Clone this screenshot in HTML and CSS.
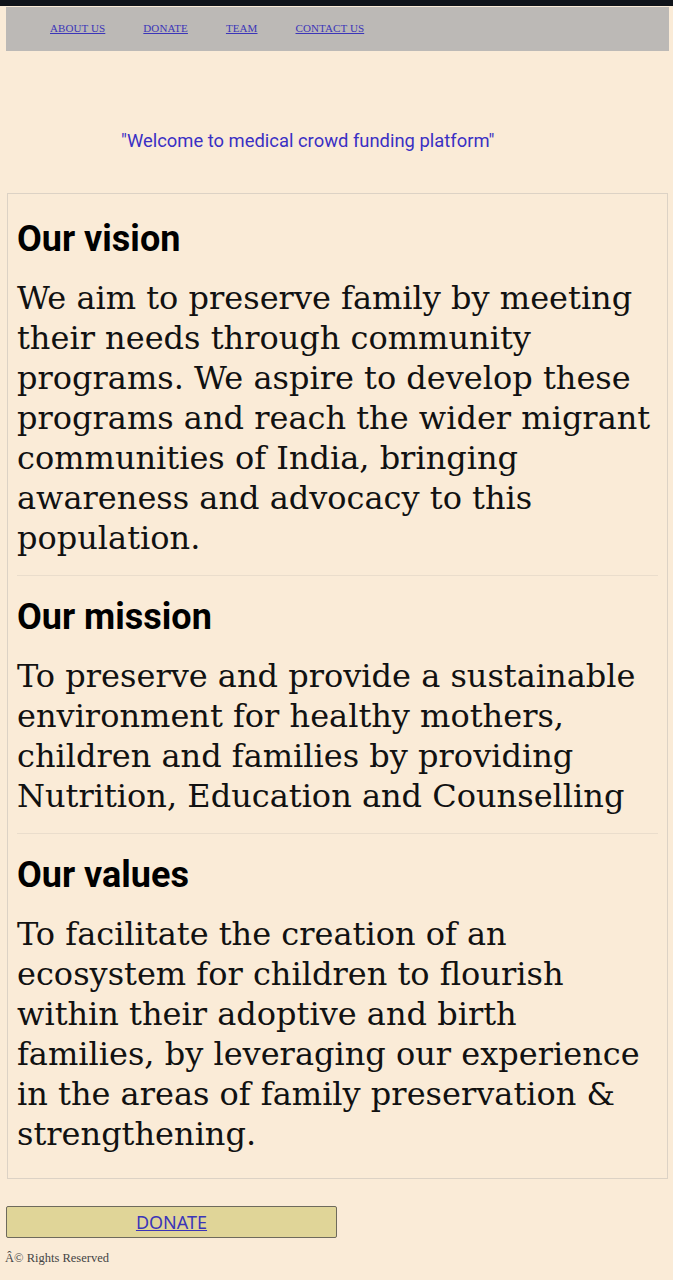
FILE: index.html
```html
<!DOCTYPE html>
<html>
<head>
<meta charset="utf-8">
<link rel="stylesheet" href="styles.css">
</head>
<body>
<div class="topstrip"></div>
<nav class="nav">
  <a href="#">ABOUT US</a>
  <a href="#">DONATE</a>
  <a href="#">TEAM</a>
  <a href="#">CONTACT US</a>
</nav>
<div class="welcome">"Welcome to medical crowd funding platform"</div>
<main class="card">
  <section class="block">
    <h2>Our vision</h2>
    <p>We aim to preserve family by meeting their needs through community programs. We aspire to develop these programs and reach the wider migrant communities of India, bringing awareness and advocacy to this population.</p>
  </section>
  <hr>
  <section class="block">
    <h2>Our mission</h2>
    <p>To preserve and provide a sustainable environment for healthy mothers, children and families by providing Nutrition, Education and Counselling</p>
  </section>
  <hr>
  <section class="block">
    <h2>Our values</h2>
    <p>To facilitate the creation of an ecosystem for children to flourish within their adoptive and birth families, by leveraging our experience in the areas of family preservation &amp; strengthening.</p>
  </section>
</main>
<div class="actions">
  <a class="donate" href="#">DONATE</a>
</div>
<footer class="foot">Â© Rights Reserved</footer>
</body>
</html>
```
FILE: styles.css
```css
html, body {
  margin: 0;
  padding: 0;
  background: #faebd7;
}
body {
  font-family: "DejaVu Serif", serif;
}
.topstrip {
  height: 6px;
  background: #10141a;
}
.nav {
  margin: 1px 4px 0 6px;
  height: 44px;
  background: #bcb9b6;
  display: flex;
  align-items: center;
  gap: 38px;
  padding-left: 44px;
  padding-bottom: 2px;
  box-sizing: border-box;
}
.nav a {
  font-family: "Liberation Serif", serif;
  font-size: 11px;
  letter-spacing: 0.1px;
  color: #3b35b8;
  text-decoration: underline;
}
.welcome {
  height: 142px;
  box-sizing: border-box;
  padding: 79px 0 0 121px;
  font-family: Roboto, sans-serif;
  font-size: 18.4px;
  color: #3a30c4;
}
.card {
  margin: 0 5px 0 7px;
  border: 1px solid #dcd2c5;
  padding: 25px 9px 7px 9px;
}
.block h2 {
  margin: 0;
  font-family: Roboto, sans-serif;
  font-weight: 700;
  font-size: 36px;
  line-height: 40px;
  color: #000;
}
.block p {
  margin: 19px 0 17px 0;
  font-size: 32px;
  line-height: 40px;
  color: #111;
}
.card hr {
  border: 0;
  border-top: 1px solid #eaddcc;
  margin: 0 0 21px 0;
}
.actions {
  padding: 27px 0 0 6px;
}
.donate {
  display: block;
  width: 331px;
  height: 32px;
  box-sizing: border-box;
  background: #e0d598;
  border: 1px solid #6e6a5c;
  border-radius: 2px;
  text-align: center;
  font-family: "Noto Sans", sans-serif;
  font-size: 18px;
  line-height: 30px;
  color: #3b35b8;
  text-decoration: underline;
}
.foot {
  padding: 13px 0 0 5px;
  font-family: "Liberation Serif", serif;
  font-size: 12.5px;
  color: #444;
}
```
